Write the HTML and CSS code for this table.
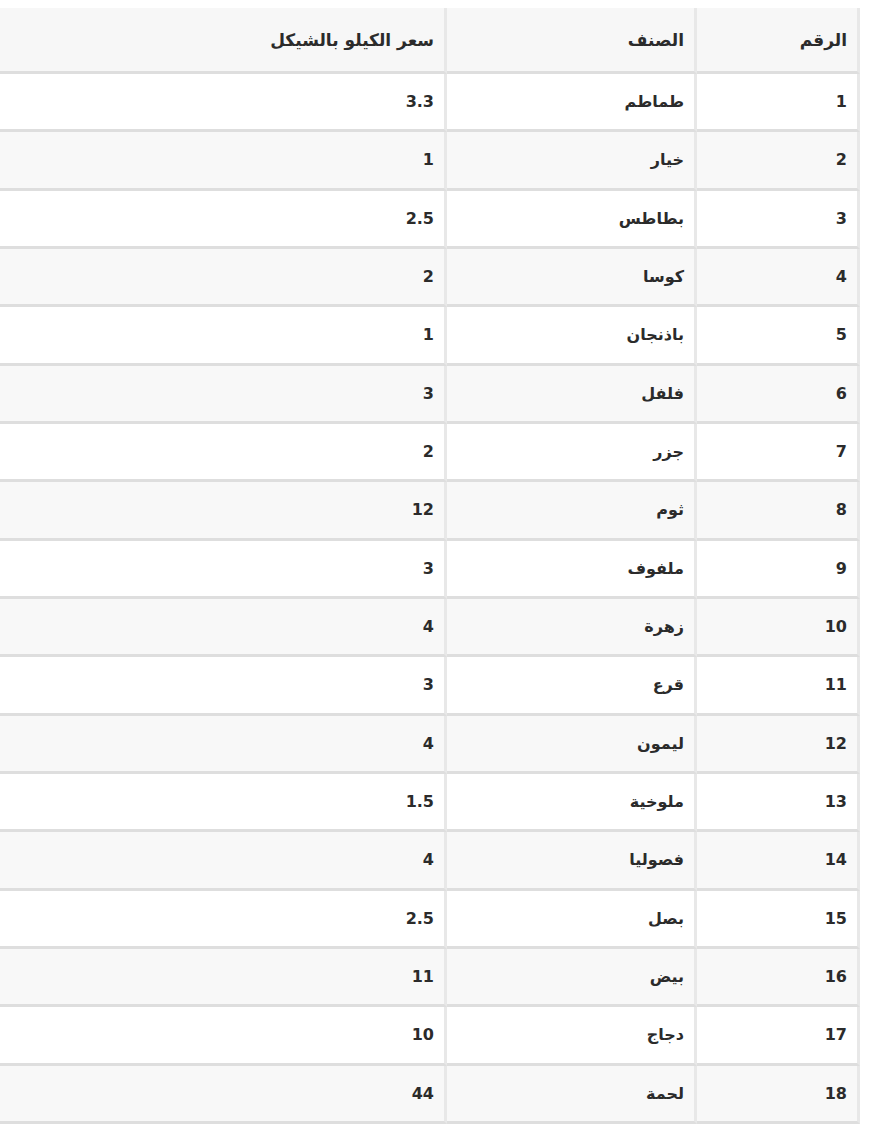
FILE: index.html
```html
<!DOCTYPE html>
<html lang="ar" dir="rtl">
<head>
<meta charset="utf-8">
<title>أسعار الخضار</title>
<link rel="stylesheet" href="styles.css">
</head>
<body>
<table class="prices">
  <thead>
    <tr><th class="c-num">الرقم</th><th class="c-name">الصنف</th><th class="c-price">سعر الكيلو بالشيكل</th></tr>
  </thead>
  <tbody>
    <tr><td>1</td><td>طماطم</td><td>3.3</td></tr>
    <tr><td>2</td><td>خيار</td><td>1</td></tr>
    <tr><td>3</td><td>بطاطس</td><td>2.5</td></tr>
    <tr><td>4</td><td>كوسا</td><td>2</td></tr>
    <tr><td>5</td><td>باذنجان</td><td>1</td></tr>
    <tr><td>6</td><td>فلفل</td><td>3</td></tr>
    <tr><td>7</td><td>جزر</td><td>2</td></tr>
    <tr><td>8</td><td>ثوم</td><td>12</td></tr>
    <tr><td>9</td><td>ملفوف</td><td>3</td></tr>
    <tr><td>10</td><td>زهرة</td><td>4</td></tr>
    <tr><td>11</td><td>قرع</td><td>3</td></tr>
    <tr><td>12</td><td>ليمون</td><td>4</td></tr>
    <tr><td>13</td><td>ملوخية</td><td>1.5</td></tr>
    <tr><td>14</td><td>فصوليا</td><td>4</td></tr>
    <tr><td>15</td><td>بصل</td><td>2.5</td></tr>
    <tr><td>16</td><td>بيض</td><td>11</td></tr>
    <tr><td>17</td><td>دجاج</td><td>10</td></tr>
    <tr><td>18</td><td>لحمة</td><td>44</td></tr>
  </tbody>
</table>
</body>
</html>
```
FILE: styles.css
```css
html, body {
  margin: 0;
  padding: 0;
  background: #ffffff;
}
body {
  font-family: "DejaVu Sans", "Liberation Sans", sans-serif;
  color: #2b2b2b;
  direction: rtl;
}
.prices {
  width: 860px;
  margin: 8px 17px 0 0;
  border-collapse: separate;
  border-spacing: 0;
  table-layout: fixed;
}
.prices th,
.prices td {
  text-align: right;
  vertical-align: middle;
  font-size: 16px;
  font-weight: bold;
  padding: 0 10px;
  border-right: 3px solid #e8e8e8;
  border-bottom: 3px solid #dedede;
  box-sizing: border-box;
}
.prices th {
  height: 66px;
  font-size: 17px;
  background: #f7f7f7;
}
.prices td {
  height: 58.33px;
}
.c-num { width: 163px; }
.c-name { width: 250px; }
.c-price { width: auto; }
.prices tbody tr:nth-child(odd) td { background: #ffffff; }
.prices tbody tr:nth-child(even) td { background: #f8f8f8; }
```
